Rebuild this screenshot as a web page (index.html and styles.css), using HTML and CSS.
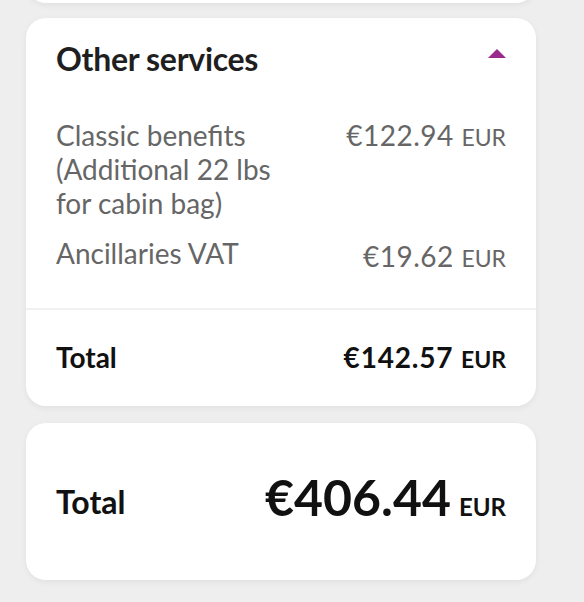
FILE: index.html
```html
<!DOCTYPE html>
<html lang="en">
<head>
<meta charset="utf-8">
<link rel="stylesheet" href="styles.css">
</head>
<body>
<div class="page">
  <div class="card card-prev"></div>
  <section class="card">
    <div class="header">
      <h2 class="title">Other services</h2>
      <svg class="caret" width="18" height="9" viewBox="0 0 18 9"><path d="M9 0 L18 9 L0 9 Z" fill="#982b8c"/></svg>
    </div>
    <div class="items">
      <div class="row">
        <div class="label">Classic benefits<br>(Additional 22 lbs<br>for cabin bag)</div>
        <div class="price">€122.94 <span class="cur">EUR</span></div>
      </div>
      <div class="row">
        <div class="label">Ancillaries VAT</div>
        <div class="price price-low">€19.62 <span class="cur">EUR</span></div>
      </div>
    </div>
    <div class="total-row">
      <div class="total-label">Total</div>
      <div class="total-price">€142.57 <span class="cur-b">EUR</span></div>
    </div>
  </section>
  <section class="card grand">
    <div class="grand-label">Total</div>
    <div class="grand-price">€406.44<span class="grand-cur">EUR</span></div>
  </section>
</div>
</body>
</html>
```
FILE: styles.css
```css
* { box-sizing: border-box; }
html, body { margin: 0; padding: 0; }
body {
  background: #eeeeee;
  font-family: Lato, "Open Sans", sans-serif;
  width: 584px;
  height: 602px;
  overflow: hidden;
}
.page {
  display: flex;
  flex-direction: column;
  gap: 15px;
  padding: 0 48px 0 26px;
}
.card {
  background: #ffffff;
  border-radius: 20px;
  box-shadow: 0 2px 6px rgba(0,0,0,0.06);
}
.card-prev {
  height: 40px;
  margin-top: -37px;
}
.header {
  display: flex;
  justify-content: space-between;
  align-items: center;
  padding: 23px 30px 24px;
}
.title {
  margin: 0;
  font-size: 32px;
  line-height: 36px;
  font-weight: 700;
  color: #1f1f1f;
  letter-spacing: -0.3px;
}
.caret { margin-top: -12px; }
.items {
  display: flex;
  flex-direction: column;
  gap: 16px;
  padding: 17px 30px 36px;
  border-bottom: 2px solid #f1f1f1;
}
.row {
  display: flex;
  justify-content: space-between;
  align-items: baseline;
}
.label {
  font-size: 28px;
  line-height: 34px;
  color: #666666;
}
.price {
  font-size: 28px;
  line-height: 34px;
  color: #666666;
  letter-spacing: 0.5px;
}
.price-low { position: relative; top: 3px; }
.cur { font-size: 23px; letter-spacing: 0; }
.total-row {
  display: flex;
  justify-content: space-between;
  align-items: baseline;
  padding: 30px 30px 29px;
}
.total-label {
  font-size: 28px;
  line-height: 35px;
  font-weight: 700;
  color: #111111;
}
.total-price {
  font-size: 28px;
  line-height: 35px;
  font-weight: 700;
  color: #111111;
  letter-spacing: 0.8px;
}
.cur-b { font-size: 23px; letter-spacing: 0; }
.grand {
  display: flex;
  justify-content: space-between;
  align-items: center;
  margin-top: 2px;
  padding: 0 30px;
  height: 157px;
}
.grand-label {
  font-size: 32px;
  line-height: 40px;
  font-weight: 700;
  color: #111111;
}
.grand-price {
  font-size: 50px;
  line-height: 56px;
  font-weight: 700;
  color: #111111;
}
.grand-cur { font-size: 24px; margin-left: 8px; }
```
